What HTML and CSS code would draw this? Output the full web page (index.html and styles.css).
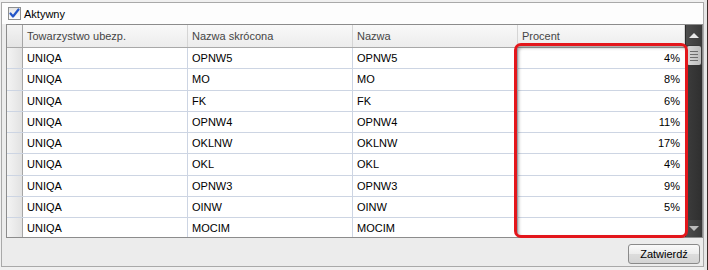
FILE: index.html
```html
<!DOCTYPE html>
<html lang="pl">

<head>
    <meta charset="UTF-8">
    <title>Procenty</title>
    <link rel="stylesheet" href="styles.css">
</head>

<body>

    <div class="window">
        <div class="panel">
            <div class="top">
                <span class="check">
                    <svg width="11" height="11" viewBox="0 0 11 11">
                        <path d="M1.5 5.5 L4 8.5 L9.5 1.5" fill="none" stroke="#2456c8" stroke-width="2.2" stroke-linejoin="round" stroke-linecap="round"/>
                    </svg>
                </span>
                <span>Aktywny</span>
            </div>

            <div class="grid">
                <div class="table">
                    <div class="row head">
                        <div class="cell rh corner"></div>
                        <div class="cell c1">Towarzystwo ubezp.</div>
                        <div class="cell c2">Nazwa skrócona</div>
                        <div class="cell c3">Nazwa</div>
                        <div class="cell c4">Procent</div>
                    </div>
                    <div class="row"><div class="cell rh"></div><div class="cell c1">UNIQA</div><div class="cell c2">OPNW5</div><div class="cell c3">OPNW5</div><div class="cell c4 num">4%</div></div>
                    <div class="row"><div class="cell rh"></div><div class="cell c1">UNIQA</div><div class="cell c2">MO</div><div class="cell c3">MO</div><div class="cell c4 num">8%</div></div>
                    <div class="row"><div class="cell rh"></div><div class="cell c1">UNIQA</div><div class="cell c2">FK</div><div class="cell c3">FK</div><div class="cell c4 num">6%</div></div>
                    <div class="row"><div class="cell rh"></div><div class="cell c1">UNIQA</div><div class="cell c2">OPNW4</div><div class="cell c3">OPNW4</div><div class="cell c4 num">11%</div></div>
                    <div class="row"><div class="cell rh"></div><div class="cell c1">UNIQA</div><div class="cell c2">OKLNW</div><div class="cell c3">OKLNW</div><div class="cell c4 num">17%</div></div>
                    <div class="row"><div class="cell rh"></div><div class="cell c1">UNIQA</div><div class="cell c2">OKL</div><div class="cell c3">OKL</div><div class="cell c4 num">4%</div></div>
                    <div class="row"><div class="cell rh"></div><div class="cell c1">UNIQA</div><div class="cell c2">OPNW3</div><div class="cell c3">OPNW3</div><div class="cell c4 num">9%</div></div>
                    <div class="row"><div class="cell rh"></div><div class="cell c1">UNIQA</div><div class="cell c2">OINW</div><div class="cell c3">OINW</div><div class="cell c4 num">5%</div></div>
                    <div class="row"><div class="cell rh"></div><div class="cell c1">UNIQA</div><div class="cell c2">MOCIM</div><div class="cell c3">MOCIM</div><div class="cell c4 num"></div></div>
                </div>
                <div class="scrollbar">
                    <div class="arrow up"></div>
                    <div class="thumb"><i></i><i></i><i></i><i></i></div>
                    <div class="track"></div>
                    <div class="arrow down"></div>
                </div>
            </div>

            <div class="footer">
                <button>Zatwierdź</button>
            </div>
        </div>
        <div class="edge"></div>

        <!-- red marker drawn over the Procent column -->
        <div class="marker"></div>
    </div>

</body>

</html>
```

FILE: styles.css
```css
body {
    margin: 0;
    font-family: "Liberation Sans", Arial, sans-serif;
    font-size: 11px;
    color: #000;
    background-color: #f0f0f0;
}

.window {
    position: relative;
    display: flex;
    width: 708px;
    height: 270px;
    box-sizing: border-box;
    padding: 2px 0 3px 1px;
}

.panel {
    flex: 1;
    display: flex;
    flex-direction: column;
    border: 1px solid #a9a9a9;
    background-color: #ececec;
}

.edge {
    width: 5px;
    margin: -2px 0 -3px 0;
    background: linear-gradient(to right, #e6e6e6 0, #e6e6e6 3px, #3b2b29 3px);
}

.top {
    height: 21px;
    display: flex;
    align-items: center;
    gap: 3px;
    padding-left: 6px;
    background-color: #fdfdfd;
}

.check {
    width: 11px;
    height: 11px;
    border: 1px solid #8e8f8f;
    background: linear-gradient(#e4e4e4, #fdfdfd);
    display: flex;
}

.grid {
    display: flex;
    height: 212px;
    margin: 0 0 0 4px;
    border: 1px solid #8c8c8c;
    background-color: #ececec;
}

.table {
    flex: 1;
    overflow: hidden;
    background-color: #fff;
}

.row {
    display: flex;
    height: 21.3px;
    box-sizing: border-box;
    border-bottom: 1px solid #cdd5e3;
}

.cell {
    box-sizing: border-box;
    padding: 0 4px;
    line-height: 20px;
    white-space: nowrap;
    border-right: 1px solid #cdd5e3;
}

.rh {
    width: 16px;
    padding: 0;
    background: linear-gradient(to right, #f4f4f4, #e2e2e2);
    border-right: 1px solid #a6a6a6;
}

.c1,
.c2,
.c3 {
    width: 165px;
}

.c4 {
    width: 167px;
    border-right: none;
}

.num {
    text-align: right;
    padding-right: 5px;
}

.head {
    height: 23px;
    border-bottom: 1px solid #a8a8a8;
    background: linear-gradient(#f9f9f9, #ececec);
    color: #454545;
}

.head .cell {
    line-height: 22px;
    border-right: 1px solid #d5d5d5;
}

.head .corner {
    background: linear-gradient(#f4f4f4, #e4e4e4);
    border-right: 1px solid #a6a6a6;
}

.scrollbar {
    width: 16px;
    display: flex;
    flex-direction: column;
    background-color: #3a3a3a;
    border-left: 1px solid #2a2a2a;
}

.arrow {
    height: 20px;
    display: flex;
    align-items: center;
    justify-content: center;
    background: linear-gradient(to right, #4d4d4d, #3a3a3a);
}

.arrow::before {
    content: "";
    border-left: 5px solid transparent;
    border-right: 5px solid transparent;
}

.up::before {
    border-bottom: 5px solid #e8e8e8;
}

.down {
    height: 17px;
}

.down::before {
    border-top: 5px solid #bdbdbd;
}

.thumb {
    height: 19px;
    margin: 1px 1px 0 1px;
    display: flex;
    flex-direction: column;
    justify-content: center;
    gap: 2px;
    border-radius: 2px;
    background: linear-gradient(to right, #d9d9d9, #bdbdbd);
}

.thumb i {
    display: block;
    height: 1px;
    margin: 0 3px;
    background-color: #6e6e6e;
}

.track {
    flex: 1;
    background: linear-gradient(to right, #3c3c3c, #2f2f2f);
}

.footer {
    flex: 1;
    display: flex;
    justify-content: flex-end;
    align-items: flex-start;
    padding: 6px 3px 0 0;
}

button {
    width: 72px;
    height: 20px;
    padding: 0;
    font-family: "Liberation Sans", Arial, sans-serif;
    font-size: 11px;
    color: #000;
    border: 1px solid #8a8a8a;
    border-radius: 3px;
    background: linear-gradient(#fafafa 0%, #ececec 50%, #dcdcdc 51%, #d4d4d4 100%);
}

.marker {
    position: absolute;
    left: 514px;
    top: 43px;
    width: 174px;
    height: 195px;
    box-sizing: border-box;
    border: 3px solid #e3161b;
    border-radius: 7px;
    box-shadow: inset 2px 2px 3px rgba(0, 0, 0, 0.3);
}
```
